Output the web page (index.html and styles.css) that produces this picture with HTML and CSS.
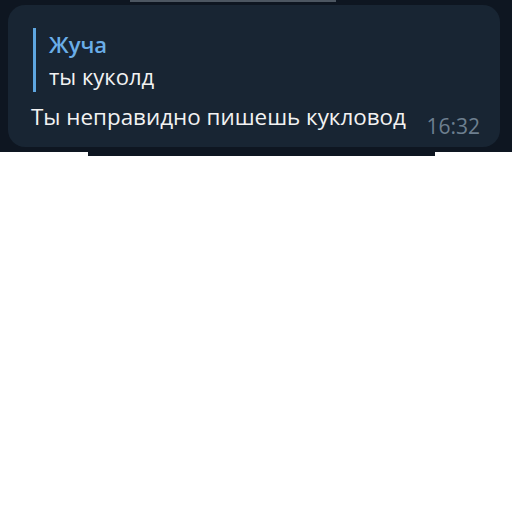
FILE: index.html
```html
<!DOCTYPE html>
<html lang="ru">
<head>
    <meta charset="UTF-8">
    <title>Жуча</title>
    <link rel="stylesheet" href="styles.css">
</head>
<body>

    <div class="chat">
        <div class="prev-edge"></div>
        <div class="bubble">
            <div class="reply">
                <p class="reply-name">Жуча</p>
                <p class="reply-text">ты куколд</p>
            </div>
            <div class="message">
                <span class="message-text">Ты неправидно пишешь кукловод</span>
                <span class="time">16:32</span>
            </div>
        </div>
    </div>
    <div class="chat-tail"></div>

</body>
</html>
```

FILE: styles.css
```css
body {
    margin: 0;
    background-color: #ffffff;
    font-family: 'Open Sans', 'Noto Sans', sans-serif;
}
.chat {
    width: 512px;
    height: 152px;
    padding: 0 12px 0 8px;
    box-sizing: border-box;
    background-color: #0e1621;
}
.prev-edge {
    width: 206px;
    height: 2px;
    margin: 0 0 3px 122px;
    background-color: #4c5661;
}
.bubble {
    height: 142px;
    box-sizing: border-box;
    padding: 23px 20px 0 23px;
    border-radius: 17px;
    background-color: #182533;
}
.reply {
    border-left: 3px solid #5ea6e0;
    padding-left: 13px;
    margin-left: 2px;
}
.reply p {
    margin: 0;
    font-size: 22px;
    line-height: 32px;
}
.reply-name {
    color: #6aaee8;
    font-weight: 600;
}
.reply-text {
    color: #f2f2f2;
}
.message {
    display: flex;
    justify-content: space-between;
    align-items: flex-start;
    margin-top: 9px;
}
.message-text {
    color: #f2f2f2;
    font-size: 22.4px;
    line-height: 32px;
}
.time {
    margin-top: 13px;
    color: #6d7f8f;
    font-size: 21px;
    line-height: 24px;
}
.chat-tail {
    width: 347px;
    height: 4px;
    margin-left: 88px;
    background-color: #0e1621;
}
```
